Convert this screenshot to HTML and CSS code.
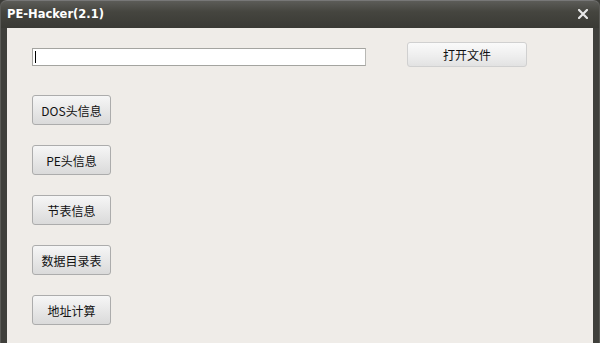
FILE: index.html
```html
<!DOCTYPE html>
<html>
<head>
<meta charset="utf-8">
<link rel="stylesheet" href="styles.css">
</head>
<body>
<div class="window">
  <div class="titlebar">
    <span class="title">PE-Hacker(2.1)</span>
    <span class="close">
      <svg width="10" height="10" viewBox="0 0 10 10"><path d="M1 1 L9 9 M9 1 L1 9" stroke="#e8e8e8" stroke-width="2.2" stroke-linecap="square"/></svg>
    </span>
  </div>
  <div class="content">
    <div class="toprow">
      <div class="input"><span class="caret"></span></div>
      <button class="btn open">打开文件</button>
    </div>
    <div class="list">
      <button class="btn side">DOS头信息</button>
      <button class="btn side">PE头信息</button>
      <button class="btn side">节表信息</button>
      <button class="btn side">数据目录表</button>
      <button class="btn side">地址计算</button>
    </div>
  </div>
</div>
</body>
</html>
```
FILE: styles.css
```css
html, body { margin: 0; padding: 0; }
body { width: 600px; height: 343px; overflow: hidden; background: #3c3c38; font-family: "Noto Sans CJK SC", "Liberation Sans", sans-serif; }
.window { width: 600px; height: 343px; background: #3f3f3b; border-radius: 6px 6px 0 0; display: flex; flex-direction: column; box-sizing: border-box; border-left: 1px solid #5a5a56; border-right: 1px solid #5a5a56; }
.titlebar { height: 28px; flex: none; background: linear-gradient(#5c5c58, #45453f 40%, #3a3a35); border-radius: 6px 6px 0 0; display: flex; align-items: center; justify-content: space-between; padding: 0 11px 2px 6px; box-sizing: border-box; border-top: 1px solid #777; }
.title { color: #fff; font-family: "DejaVu Sans", sans-serif; font-weight: bold; font-size: 11.5px; }
.close { display: flex; }
.content { flex: 1; margin: 0 6px; background: #efece8; padding: 14px 0 0 25px; }
.toprow { display: flex; align-items: center; }
.input { width: 330px; height: 16px; background: #fff; border: 1px solid #a4a4a0; border-right-color: #b8b8b4; display: flex; align-items: center; padding-left: 2px; margin-top: 5px; }
.caret { width: 1px; height: 12px; background: #000; }
.btn { font-family: "Noto Sans CJK SC", sans-serif; font-size: 12px; color: #111; background: linear-gradient(#f6f6f6, #e8e8e8 50%, #dadada); border: 1px solid #acacac; border-radius: 3px; padding: 0; cursor: default; }
.open { width: 120px; height: 25px; margin-left: 41px; border-color: #d0d0d0; background: linear-gradient(#fafafa, #ededed 60%, #e2e2e2); }
.list { display: flex; flex-direction: column; gap: 20px; margin-top: 28px; }
.side { width: 79px; height: 30px; }
```
